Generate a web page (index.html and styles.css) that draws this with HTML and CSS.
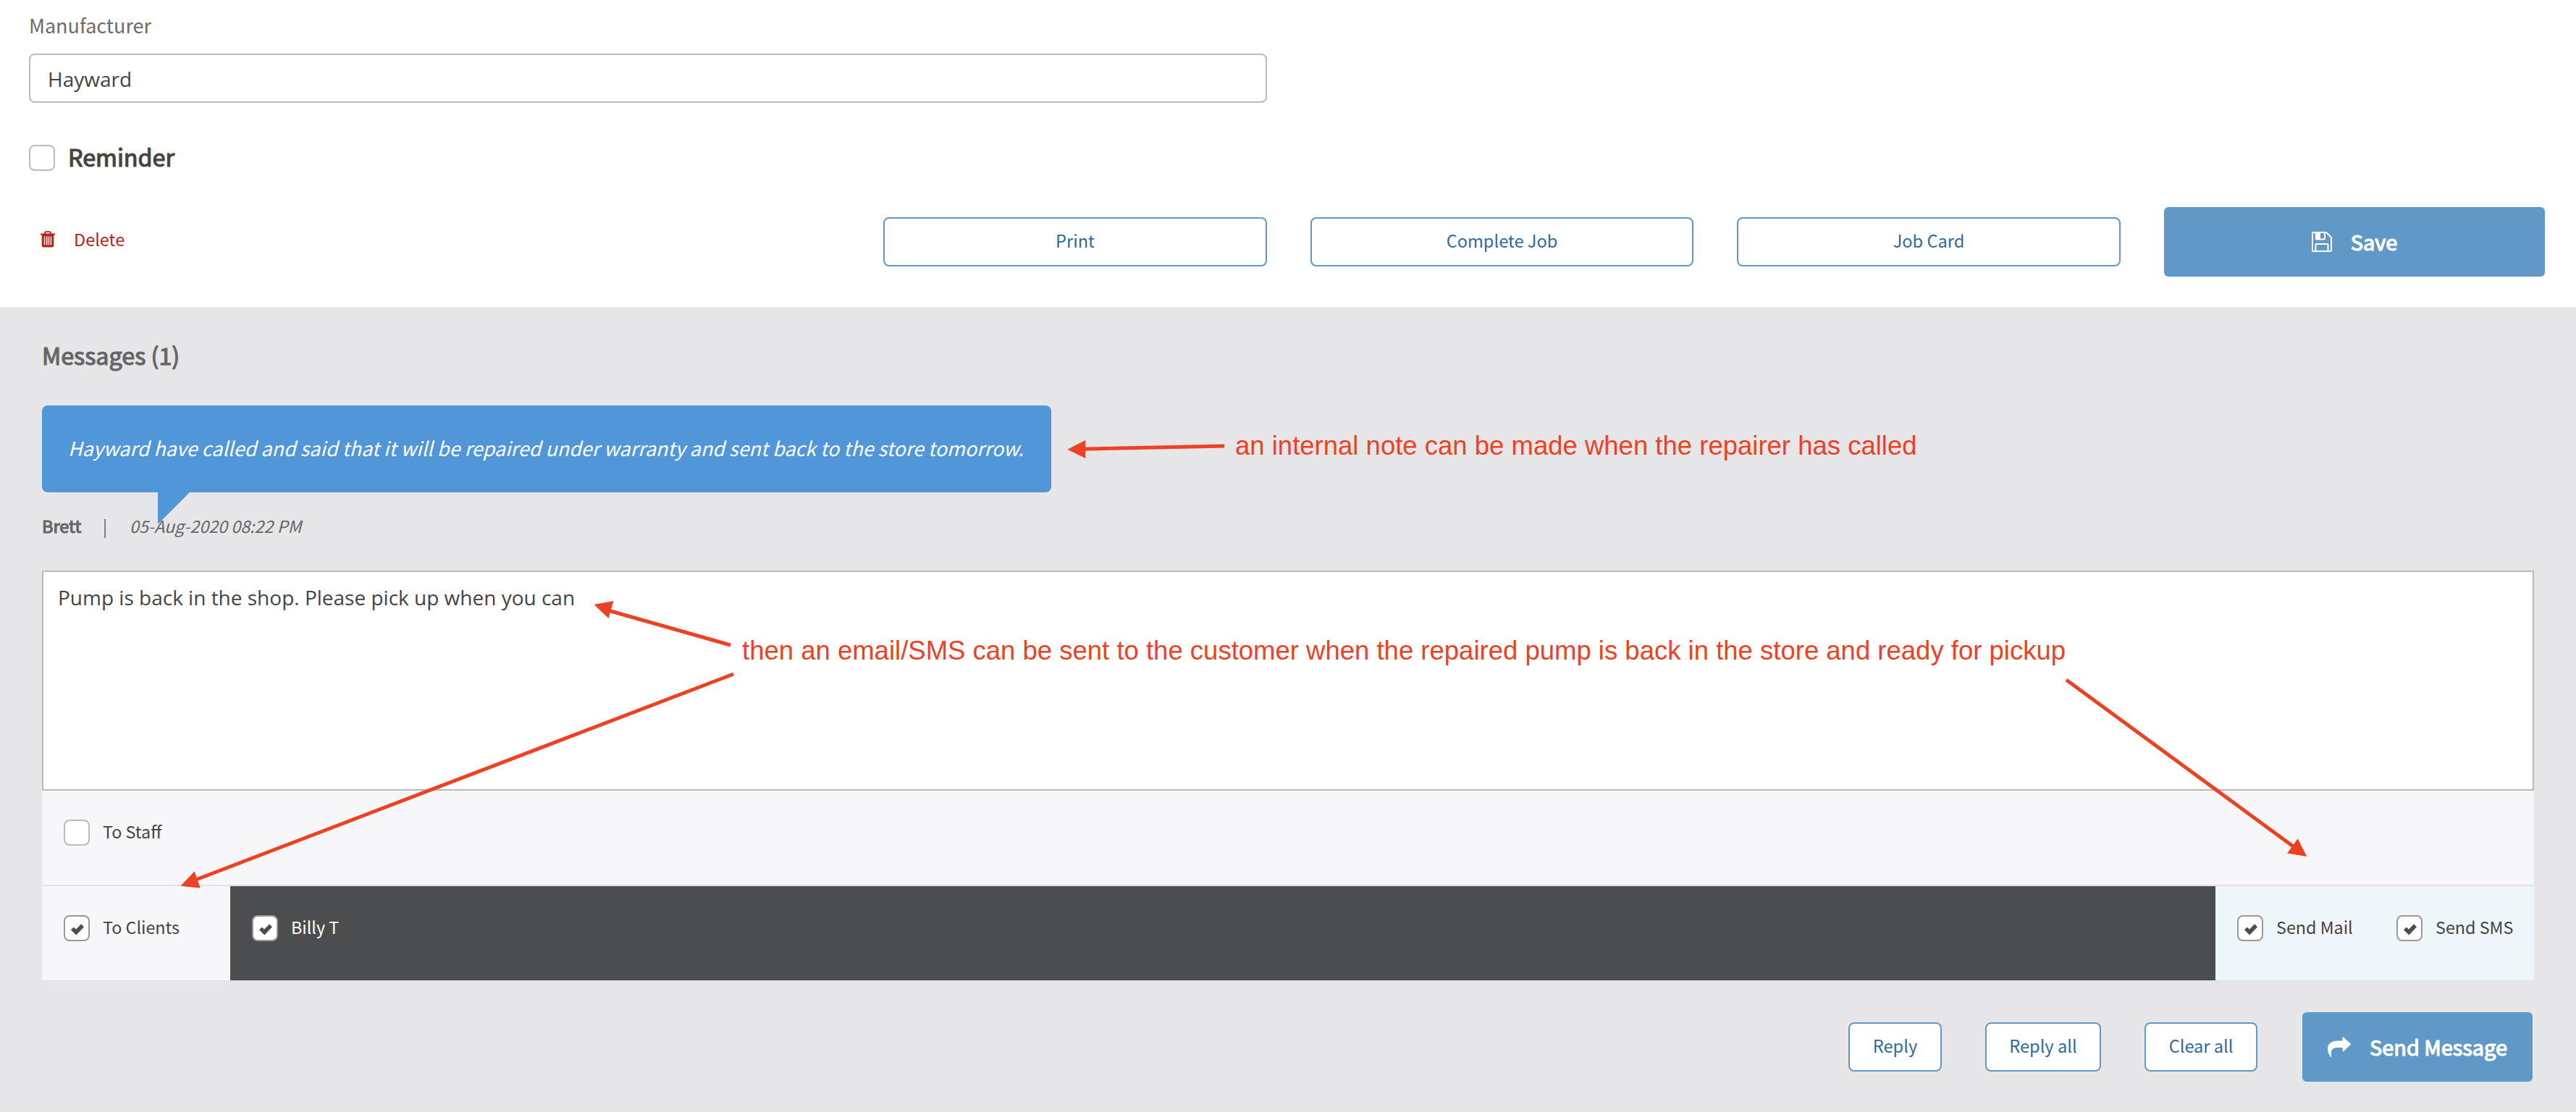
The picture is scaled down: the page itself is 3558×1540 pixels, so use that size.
FILE: index.html
```html
<!DOCTYPE html>
<html lang="en">
<head>
<meta charset="utf-8">
<title>Job details</title>
<link rel="stylesheet" href="styles.css">
</head>
<body>
<svg class="symbols" aria-hidden="true">
  <symbol id="tick" viewBox="0 0 18 16"><path d="M0 8.3 3.7 4.5 7 7.4 14.1 0.3 18 4.2 7.3 15.6Z"/></symbol>
</svg>

<main class="page">
  <section class="job">
    <label class="field-label" for="manufacturer">Manufacturer</label>
    <input class="field" id="manufacturer" type="text" value="Hayward">

    <div class="check check-reminder"><span class="box"></span><span class="check-text">Reminder</span></div>

    <div class="job-actions">
      <a class="delete">
        <svg class="icon-trash" viewBox="0 0 20 23">
          <path fill-rule="evenodd" d="M5.2 3.6V2.4Q5.2.2 7.4.2h5.2Q14.8.2 14.8 2.4v1.2H20v1.8h-1.7v14.8q0 2.4-2.4 2.4H4.1q-2.4 0-2.4-2.4V5.4H0V3.6ZM7 3.6h6V2.5Q13 2 12.5 2h-5Q7 2 7 2.5ZM4.8 7.6v11.6h1.5V7.6ZM7.9 7.6v11.6h1.5V7.6ZM10.7 7.6v11.6h1.5V7.6ZM13.7 7.6v11.6h1.5V7.6Z"/>
        </svg>
        <span>Delete</span>
      </a>
      <button class="btn">Print</button>
      <button class="btn">Complete Job</button>
      <button class="btn">Job Card</button>
      <button class="btn-primary">
        <svg class="icon-save" viewBox="0 0 28 28">
          <path fill="none" stroke="currentColor" stroke-width="2" stroke-linejoin="round" d="M1 2Q1 1 2 1H20L27 8V26Q27 27 26 27H2Q1 27 1 26ZM5.7 1.5V9.5Q5.7 10.5 6.7 10.5H17Q18 10.5 18 9.5V1.5M5.5 26.5V18Q5.5 17 6.5 17H21.5Q22.5 17 22.5 18V26.5"/>
          <path fill="currentColor" d="M6 1h6v9H6z"/>
        </svg>
        <span class="btn-label">Save</span>
      </button>
    </div>
  </section>

  <section class="messages">
    <h2 class="messages-title">Messages (1)</h2>
    <div class="bubble">Hayward have called and said that it will be repaired under warranty and sent back to the store tomorrow.</div>
    <div class="meta"><b class="author">Brett</b><i class="divider"></i><em class="date">05-Aug-2020 08:22 PM</em></div>

    <div class="compose">
      <textarea class="message-input">Pump is back in the shop. Please pick up when you can</textarea>
      <div class="recipients">
        <div class="cell cell-type"><div class="check"><span class="box"></span><span class="check-text">To Staff</span></div></div>
      </div>
      <div class="recipients">
        <div class="cell cell-type"><div class="check"><span class="box on"><svg class="tick"><use href="#tick"/></svg></span><span class="check-text">To Clients</span></div></div>
        <div class="cell cell-people"><div class="check"><span class="box on"><svg class="tick"><use href="#tick"/></svg></span><span class="check-text">Billy T</span></div></div>
        <div class="cell cell-channels">
          <div class="check"><span class="box on"><svg class="tick"><use href="#tick"/></svg></span><span class="check-text">Send Mail</span></div>
          <div class="check"><span class="box on"><svg class="tick"><use href="#tick"/></svg></span><span class="check-text">Send SMS</span></div>
        </div>
      </div>
    </div>

    <div class="message-actions">
      <button class="btn">Reply</button>
      <button class="btn">Reply all</button>
      <button class="btn">Clear all</button>
      <button class="btn-primary btn-send">
        <svg class="icon-share" viewBox="0 0 32 28">
          <path fill="currentColor" d="M20.5.8Q20.5-.4 21.6.4L31.6 9.3Q32.3 10 31.6 10.7L21.8 20.2Q20.8 21 20.8 19.8V15H14C7.5 15 4.8 17.5 4.8 22.5Q4.8 25 5 27.2Q4.6 28.6 3.6 27.4C1.5 23.8 0 20.5 0 17C0 9.5 5 5.5 14 5.5H20.5Z"/>
        </svg>
        <span class="btn-label">Send Message</span>
      </button>
    </div>
  </section>

  <!-- Training notes drawn over the form -->
  <svg class="notes" viewBox="0 0 3558 1540">
    <g class="note-lines">
      <path d="M1495 620.2 1691 616"/>
      <path d="M840 843 1009 891"/>
      <path d="M268 1216 1013 931"/>
      <path d="M2854 939 3170 1171"/>
    </g>
    <g class="note-heads">
      <path d="M1474.4 620.7 1499.2 608V633Z"/>
      <path d="M820.5 835 847.3 830 840.6 854Z"/>
      <path d="M249.5 1223.7 268.6 1203.5 276.7 1226.5Z"/>
      <path d="M3186.2 1183 3173.7 1158.3 3159.2 1178.5Z"/>
    </g>
    <text x="1706" y="628">an internal note can be made when the repairer has called</text>
    <text x="1025" y="911">then an email/SMS can be sent to the customer when the repaired pump is back in the store and ready for pickup</text>
  </svg>
</main>
</body>
</html>
```
FILE: styles.css
```css
* { box-sizing: border-box; }

body {
  margin: 0;
  background: #fff;
  color: #444;
  font-family: "Noto Sans CJK SC", "Open Sans", sans-serif;
  font-size: 23.5px;
  line-height: 36px;
}

button, input, textarea { font: inherit; margin: 0; }

.symbols { display: none; }
.page { position: relative; width: 3558px; height: 1540px; overflow: hidden; }

/* Job form */
.job {
  display: flex;
  flex-direction: column;
  height: 424px;
  padding: 15px 42px 0 40px;
}
.field-label { font-size: 27px; line-height: 40px; height: 59px; color: #6b6b6b; }
.field {
  width: 1710px;
  height: 68px;
  padding: 1px 24px 0;
  border: 2px solid #bbb;
  border-radius: 8px;
  background: #fff;
  color: #444;
  font-family: "Open Sans", sans-serif;
  font-size: 28px;
}

.check { display: flex; gap: 18px; height: 36px; white-space: nowrap; }
.check-text { font-size: 23.3px; line-height: 32px; }
.box {
  display: flex;
  align-items: center;
  justify-content: center;
  width: 36px;
  height: 36px;
  flex: none;
  border: 2px solid #bbb;
  border-radius: 8px;
  background: #fff;
}
.box.on { border-color: #999; }
.tick { width: 18px; height: 16px; margin-top: 3px; margin-left: 1px; fill: #4c4d4f; }

.check-reminder { margin-top: 58px; gap: 18px; }
.check-reminder .check-text { font-size: 32.3px; line-height: 32px; -webkit-text-stroke: 1.2px; }

.job-actions {
  display: grid;
  grid-template-columns: 1120px 530px 529px 530px 526px;
  column-gap: 60px;
  align-items: center;
  height: 96px;
  margin-top: 50px;
}
.delete { display: flex; align-items: center; gap: 26px; padding: 0 0 8px 16px; color: #b9221a; }
.icon-trash { width: 20px; height: 23px; fill: currentColor; }

.btn {
  height: 68px;
  padding: 0 31.5px 4px;
  border: 2px solid #6099c8;
  border-radius: 8px;
  background: #fff;
  color: #2e6a9e;
  font-size: 23.6px;
  white-space: nowrap;
}
.btn-primary {
  display: flex;
  align-items: center;
  justify-content: center;
  gap: 26px;
  height: 96px;
  padding: 0;
  border: 0;
  border-radius: 6px;
  background: #6099c8;
  color: #fff;
  font-size: 28.9px;
  white-space: nowrap;
  -webkit-text-stroke: 1.2px;
}
.btn-label { padding-bottom: 2px; }
.icon-save { width: 28px; height: 28px; }
.icon-share { width: 32px; height: 28px; }

/* Messages */
.messages {
  display: flex;
  flex-direction: column;
  height: 1112px;
  padding: 46px 58px 0;
  background: #e6e6e8;
  color: #666;
}
.messages-title { height: 90px; margin: 0; font-size: 32.3px; line-height: 40px; font-weight: 400; -webkit-text-stroke: 1.2px; }
.bubble {
  position: relative;
  width: 1394px;
  height: 120px;
  padding-left: 36px;
  border-radius: 8px;
  background: #5196d8;
  color: #fff;
  font-size: 26.95px;
  font-style: italic;
  line-height: 118px;
  white-space: nowrap;
}
.bubble::after {
  content: "";
  position: absolute;
  left: 160px;
  top: 120px;
  border-top: 44px solid #5196d8;
  border-right: 44px solid transparent;
}
.meta { position: relative; z-index: 1; display: flex; height: 108px; padding-top: 28px; }
.author { width: 86px; font-weight: 400; -webkit-text-stroke: 1.2px; }
.divider { width: 2px; height: 26px; margin-top: 9px; background: #808080; }
.date { margin-left: 33px; font-size: 23.3px; }

.compose { display: flex; flex-direction: column; }
.message-input {
  display: block;
  width: 100%;
  height: 304px;
  padding: 17px 20px;
  border: 2px solid #b9b9b9;
  border-radius: 0;
  background: #fff;
  color: #444;
  font-family: "Open Sans", sans-serif;
  font-size: 28px;
  resize: none;
}
.recipients { display: flex; height: 132px; border-bottom: 2px solid #dee3e6; background: #f7f7f9; color: #444; }
.cell { display: flex; padding: 40px 30px 0; }
.cell-type { width: 260px; }
.cell-people { flex: 1; background: #4c4d4f; color: #fff; }
.cell-channels { width: 440px; background: #eef6fa; }
.cell-channels .check { width: 220px; flex: none; }

.message-actions { display: flex; justify-content: flex-end; align-items: center; gap: 60px; margin: 42px 2px 0 0; }
.btn-send { width: 318px; margin-left: 2px; }

.notes { position: absolute; inset: 0; width: 3558px; height: 1540px; pointer-events: none; z-index: 2; }
.note-lines { stroke: #ed4124; stroke-width: 5; }
.note-heads { fill: #ed4124; }
.notes text { fill: #ed4124; font-family: "Liberation Sans", Helvetica, sans-serif; font-size: 36.5px; }
```
